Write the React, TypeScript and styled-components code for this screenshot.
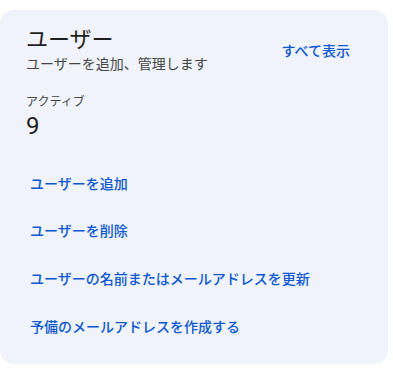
import React from 'react';
import { createGlobalStyle, styled } from 'styled-components';

const GlobalStyle = createGlobalStyle`
  html, body {
    margin: 0;
    padding: 0;
    background: #ffffff;
  }
  body {
    font-family: Roboto, "Noto Sans CJK JP", "Noto Sans", sans-serif;
    -webkit-font-smoothing: antialiased;
  }
`;

const CardStyled = styled.section`
  box-sizing: border-box;
  width: 388px;
  margin-top: 10px;
  padding: 16px 26px 15px 26px;
  background: #f0f3f9;
  border-radius: 14px;
`;

const HeaderStyled = styled.div`
  display: flex;
  align-items: center;
  justify-content: space-between;
`;

const TitleStyled = styled.h2`
  margin: 0;
  font-size: 22px;
  line-height: 28px;
  font-weight: 400;
  color: #1f1f1f;
`;

const SubtitleStyled = styled.p`
  margin: 0;
  font-size: 14px;
  line-height: 20px;
  color: #444746;
`;

const TextButton = styled.button`
  border: none;
  background: none;
  padding: 0 12px;
  height: 36px;
  font-family: inherit;
  font-size: 14px;
  font-weight: 500;
  color: #0b57d0;
  cursor: pointer;
`;

const StatStyled = styled.div`
  margin-top: 20px;
`;

const StatLabel = styled.div`
  font-size: 12px;
  line-height: 16px;
  color: #444746;
`;

const StatValue = styled.div`
  font-size: 24px;
  line-height: 32px;
  color: #1f1f1f;
`;

const LinkList = styled.ul`
  list-style: none;
  margin: 17px 0 0;
  padding: 0;
`;

const LinkItem = styled.li`
  height: 47.6px;
  display: flex;
  align-items: center;
`;

const ActionLink = styled.a`
  padding: 0 4px;
  font-size: 14px;
  font-weight: 500;
  color: #0b57d0;
  text-decoration: none;
  cursor: pointer;
`;

const actions = [
  'ユーザーを追加',
  'ユーザーを削除',
  'ユーザーの名前またはメールアドレスを更新',
  '予備のメールアドレスを作成する',
];

const App = () => {
  return (
    <>
      <GlobalStyle />
      <CardStyled>
        <HeaderStyled>
          <div>
            <TitleStyled>ユーザー</TitleStyled>
            <SubtitleStyled>ユーザーを追加、管理します</SubtitleStyled>
          </div>
          <TextButton type="button">すべて表示</TextButton>
        </HeaderStyled>
        <StatStyled>
          <StatLabel>アクティブ</StatLabel>
          <StatValue>9</StatValue>
        </StatStyled>
        <LinkList>
          {actions.map((label) => (
            <LinkItem key={label}>
              <ActionLink>{label}</ActionLink>
            </LinkItem>
          ))}
        </LinkList>
      </CardStyled>
    </>
  );
};

export default App;
